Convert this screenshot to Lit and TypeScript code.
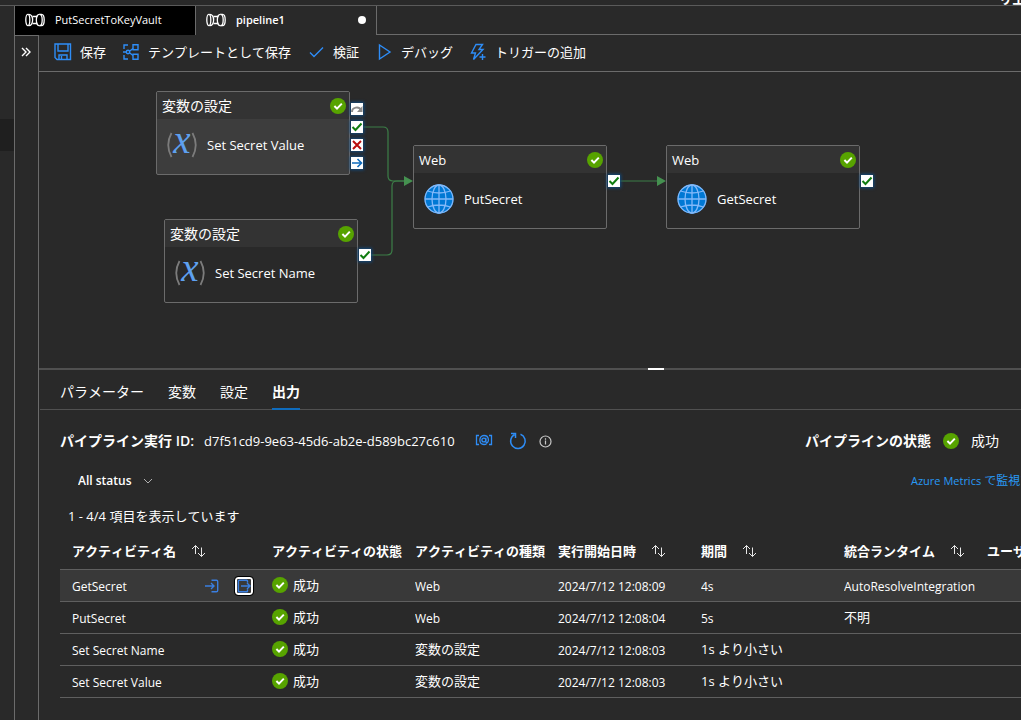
import { LitElement, html, svg, css, nothing } from "lit";
import { customElement, property } from "lit/decorators.js";
import { classMap } from "lit/directives/class-map.js";

const successIcon = html`<svg class="success" width="16" height="16" viewBox="0 0 16 16" role="img" aria-label="成功">
  <circle cx="8" cy="8" r="8" fill="#57a300" />
  <path d="M4.400 8l2.600 2.600 4.800-5" fill="none" stroke="#fff" stroke-width="2" />
</svg>`;

const pipelineIcon = html`<svg width="20" height="14" viewBox="0 0 20 14" fill="none" stroke="#fff" stroke-width="1.300" aria-hidden="true">
  <ellipse cx="2.800" cy="7" rx="2" ry="5.600" />
  <path d="M3.500 1.300c5.500-.6 5.500 12 0 11.400" />
  <path d="M7.500 3.500h5M7.500 10.500h5" />
  <path d="M14.500 1.300c-4.200 0-4.200 11.400 0 11.400" />
  <path d="M14.500 1.300c3.600 0 3.600 11.400 0 11.400" />
  <path d="M14.500 1.300h2c3.600 0 3.600 11.400 0 11.400h-2" />
</svg>`;

const sortIcon = html`<svg width="15" height="14" viewBox="0 0 15 14" fill="none" stroke="#e8e8e8" stroke-width="1" aria-hidden="true">
  <path d="M4.500 10V1.500M1 5l3.500-3.500L8 5M10.500 3.500v9M7 9l3.500 3.500L14 9" />
</svg>`;

const toolIcons = {
  save: svg`<path d="M1 1h15.500v15.500H3L1 14.500zM4 1v7h10V1M5 16.500v-4.500h8v4.500M7.500 13v3" />`,
  template: svg`<path d="M2 6V2h4M6 16H2v-4M11 1.800h5v5h-5zM11 11.200h5v5h-5z" /><circle cx="6" cy="9" r="1.700" /><path d="M1 9h3.300M7.500 8.200L11 5.500M7.500 9.800l3.500 2.700" />`,
  check: svg`<path d="M3 9.500l4 4L16 4.500" />`,
  play: svg`<path d="M4.500 2v14L15 9z" />`,
  trigger: svg`<path d="M7 1.500h6.500L10 6.500h4L4.500 16.500l2-6.500H2.500z" /><path d="M13.500 11v6M10.500 14h6" />`,
};

const tools: Array<[keyof typeof toolIcons, string]> = [
  ["save", "保存"],
  ["template", "テンプレートとして保存"],
  ["check", "検証"],
  ["play", "デバッグ"],
  ["trigger", "トリガーの追加"],
];

const variableIcon = html`<svg width="32" height="32" viewBox="0 0 32 32" aria-hidden="true">
  <path d="M5.500 4Q-1 16 5.500 28M26.500 4Q33 16 26.500 28" fill="none" stroke="#7c7c7c" stroke-width="1.800" />
  <text x="16" y="24" text-anchor="middle" font-family="Liberation Serif, serif" font-style="italic" font-size="39" fill="#5ea0ef">x</text>
</svg>`;

const globeIcon = html`<svg width="32" height="32" viewBox="0 0 32 32" aria-hidden="true">
  <circle cx="16" cy="16" r="14.500" fill="#0078d4" />
  <g fill="none" stroke="#83b9f9" stroke-width="1.300">
    <circle cx="16" cy="16" r="14" />
    <ellipse cx="16" cy="16" rx="7" ry="14" />
    <path d="M16 2v28M2 16h28M4.500 8Q16 12 27.500 8M4.500 24Q16 20 27.500 24" />
  </g>
</svg>`;

const portIcons = {
  skip: svg`<path d="M1 9c0-5 7-6 9-2" stroke="#8a8a8a" stroke-width="2" /><path d="M11.500 3v6H6z" fill="#8a8a8a" />`,
  ok: svg`<path d="M1.500 6l3 3 6-6.500" stroke="#107c10" stroke-width="2" />`,
  fail: svg`<path d="M2 2l8 8M10 2l-8 8" stroke="#b90e0e" stroke-width="2" />`,
  done: svg`<path d="M1 6h9M6.500 2l4 4-4 4" stroke="#0f6cbd" stroke-width="1.600" />`,
};
type Port = keyof typeof portIcons;

interface ActivityNode {
  x: number;
  y: number;
  kind: "var" | "web";
  type: string;
  name: string;
  selected?: boolean;
  ports: Port[];
}

const nodes: ActivityNode[] = [
  { x: 117, y: 19, kind: "var", type: "変数の設定", name: "Set Secret Value", selected: true, ports: ["skip", "ok", "fail", "done"] },
  { x: 125, y: 147, kind: "var", type: "変数の設定", name: "Set Secret Name", ports: ["ok"] },
  { x: 374, y: 73, kind: "web", type: "Web", name: "PutSecret", ports: ["ok"] },
  { x: 627, y: 73, kind: "web", type: "Web", name: "GetSecret", ports: ["ok"] },
];

@customElement("activity-node")
class ActivityNodeElement extends LitElement {
  @property({ attribute: false }) node!: ActivityNode;

  static styles = css`
    :host {
      display: block;
    }
    .card {
      box-sizing: border-box;
      width: 194px;
      height: 84px;
      border: 1px solid #6b6b6b;
      border-radius: 2px;
      background: #292929;
    }
    .selected {
      background: #3d3d3d;
    }
    .head {
      display: flex;
      align-items: center;
      justify-content: space-between;
      height: 27px;
      padding: 0 3px 0 5px;
      background: #333;
      font-size: 14px;
    }
    .web .head {
      font-size: 13px;
    }
    .body {
      display: flex;
      align-items: center;
      gap: 9px;
      height: 51px;
      padding-left: 9px;
      font-size: 13px;
    }
    .ports {
      position: absolute;
      left: 195px;
      top: 12px;
      display: grid;
      gap: 6px;
    }
    .single {
      top: 30px;
    }
    .port {
      display: block;
      background: #fff;
      box-shadow: 0 0 3px 1px #0f4a80;
    }
  `;

  render() {
    const n = this.node;
    return html`
      <div class=${classMap({ card: true, selected: !!n.selected, web: n.kind === "web" })}>
        <div class="head"><span>${n.type}</span>${successIcon}</div>
        <div class="body">${n.kind === "web" ? globeIcon : variableIcon}<span>${n.name}</span></div>
      </div>
      <div class=${classMap({ ports: true, single: n.ports.length === 1 })}>
        ${n.ports.map(
          (p) => html`<svg class="port" width="12" height="12" viewBox="0 0 12 12" fill="none">${portIcons[p]}</svg>`,
        )}
      </div>
    `;
  }
}

const columns: Array<{ label: string; sort: boolean }> = [
  { label: "アクティビティ名", sort: true },
  { label: "アクティビティの状態", sort: false },
  { label: "アクティビティの種類", sort: false },
  { label: "実行開始日時", sort: true },
  { label: "期間", sort: true },
  { label: "統合ランタイム", sort: true },
  { label: "ユーザー プロパティ", sort: false },
];

const runs = [
  { name: "GetSecret", type: "Web", start: "2024/7/12 12:08:09", duration: "4s", runtime: "AutoResolveIntegrationRuntime", active: true },
  { name: "PutSecret", type: "Web", start: "2024/7/12 12:08:04", duration: "5s", runtime: "不明", active: false },
  { name: "Set Secret Name", type: "変数の設定", start: "2024/7/12 12:08:03", duration: "1s より小さい", runtime: "", active: false },
  { name: "Set Secret Value", type: "変数の設定", start: "2024/7/12 12:08:03", duration: "1s より小さい", runtime: "", active: false },
];

/* Latin glyphs run wide in this family, so purely Latin cells take the smaller size. */
const cellText = (t: string) => {
  const latin = /^[\x00-\x7f]*$/.test(t);
  return html`<div class=${classMap({ clip: true, latin, kana: !latin })}>${t}</div>`;
};

@customElement("app-root")
class AppRoot extends LitElement {
  static styles = css`
    :host {
      display: flex;
      flex-direction: column;
      min-height: 100vh;
      overflow: hidden;
      background: #292929;
      color: #fff;
      font-family: "Open Sans", "Noto Sans CJK JP", sans-serif;
      font-size: 13px;
      font-kerning: none;
      line-height: 20px;
    }
    button,
    select {
      border: 0;
      margin: 0;
      padding: 0;
      background: none;
      color: inherit;
      font: inherit;
      font-kerning: none;
      white-space: nowrap;
    }
    a {
      color: #2899f5;
      text-decoration: none;
    }
    svg {
      flex: none;
      display: block;
    }
    .banner {
      display: flex;
      align-items: flex-end;
      justify-content: flex-end;
      height: 5px;
      overflow: hidden;
      border-bottom: 1px solid #5a5a5a;
      font-weight: 600;
      line-height: 12px;
    }
    .banner span {
      width: 22px;
      white-space: nowrap;
    }
    .shell {
      flex: 1;
      display: flex;
    }
    .rail {
      width: 14px;
      flex: none;
      padding-top: 113px;
      border-right: 1px solid #6b6b6b;
    }
    .railitem {
      height: 32px;
      background: #1f1f1f;
    }
    .work {
      flex: 1;
      min-width: 0;
      display: flex;
      flex-direction: column;
    }
    .files {
      display: flex;
      height: 29px;
    }
    .file {
      display: flex;
      align-items: center;
      gap: 10px;
      width: 181px;
      padding: 0 10px 2px;
      border-right: 1px solid #6b6b6b;
      font-size: 11px;
      text-align: left;
    }
    .inactive {
      background: #000;
    }
    .current {
      font-weight: 600;
    }
    .dirty {
      width: 8px;
      height: 8px;
      margin-left: auto;
      border-radius: 50%;
      background: #fff;
    }
    .filler {
      flex: 1;
      border-bottom: 1px solid #6b6b6b;
    }
    .editor {
      flex: 1;
      display: flex;
    }
    .fold {
      width: 23px;
      flex: none;
      border-top: 1px solid #6b6b6b;
      border-right: 1px solid #6b6b6b;
    }
    .fold button {
      display: flex;
      align-items: center;
      justify-content: center;
      width: 100%;
      height: 32px;
      padding-right: 2px;
    }
    .main {
      flex: 1;
      min-width: 0;
    }
    .toolbar {
      display: flex;
      align-items: center;
      gap: 16px;
      height: 34px;
      padding: 0 0 2px 15px;
      border-bottom: 1px solid #6b6b6b;
    }
    .tool {
      display: flex;
      align-items: center;
      gap: 8px;
    }
    .tool svg {
      fill: none;
      stroke: #2e8df7;
      stroke-width: 1.4;
    }
    .canvas {
      position: relative;
      height: 296px;
      overflow: hidden;
    }
    .links {
      position: absolute;
      left: 0;
      top: 0;
    }
    activity-node {
      position: absolute;
    }
    .splitter {
      display: flex;
      justify-content: center;
      height: 2px;
      background: #505050;
    }
    .grip {
      width: 16px;
      margin-left: 252px;
      background: #fff;
    }
    .tabs {
      display: flex;
      gap: 24px;
      height: 39px;
      margin-left: 1px;
      padding-left: 20px;
      border-bottom: 1px solid #505050;
      font-size: 14px;
    }
    .tab {
      height: 40px;
      padding-top: 6px;
      box-sizing: border-box;
      border-bottom: 2px solid transparent;
    }
    .on {
      border-bottom-color: #0f6cbd;
      font-weight: 700;
    }
    .details {
      padding: 10px 0 22px 21px;
    }
    .run {
      display: flex;
      align-items: center;
      height: 42px;
      padding-right: 22px;
      font-size: 14px;
    }
    .strong {
      font-weight: 600;
      white-space: nowrap;
    }
    .runid {
      margin: 0 20px 0 10px;
      font-size: 13px;
    }
    .refresh {
      margin: 0 12px 0 16px;
    }
    .state {
      display: flex;
      align-items: center;
      gap: 12px;
      margin-left: auto;
      white-space: nowrap;
    }
    .filter {
      display: flex;
      align-items: center;
      justify-content: space-between;
      height: 38px;
      padding-left: 18px;
    }
    .pick {
      display: flex;
      align-items: center;
      gap: 11px;
    }
    .pick select {
      appearance: none;
      font-size: 12px;
      font-weight: 600;
    }
    .metrics {
      width: 110px;
      font-size: 12px;
      white-space: nowrap;
    }
    .small {
      font-size: 11px;
    }
    .count {
      padding: 6px 8px;
    }
    .scroll {
      overflow: hidden;
    }
    table {
      width: 1058px;
      table-layout: fixed;
      border-collapse: separate;
      border-spacing: 0;
    }
    .first {
      width: 200px;
    }
    th,
    td {
      box-sizing: border-box;
      padding: 0 0 0 12px;
      border-bottom: 1px solid #5f5f5f;
      text-align: left;
      white-space: nowrap;
      vertical-align: middle;
    }
    th {
      height: 38px;
      font-weight: 600;
    }
    td {
      height: 32px;
    }
    .sort {
      display: flex;
      align-items: center;
      gap: 15px;
    }
    .hot {
      background: #393939;
    }
    .clip {
      overflow: hidden;
    }
    .latin {
      padding-top: 2px;
      font-size: 12px;
    }
    .kana {
      padding-bottom: 2px;
    }
    .status {
      display: flex;
      align-items: center;
      gap: 5px;
      padding-bottom: 2px;
    }
    .name {
      display: flex;
      align-items: center;
      justify-content: space-between;
      padding-right: 7px;
    }
    .io {
      display: flex;
      align-items: center;
      gap: 16px;
    }
    .focus {
      border-radius: 3px;
      outline: 1px solid #000;
      border: 2px solid #fff;
    }
  `;

  private ioIcon(out: boolean) {
    return html`<svg width="14" height="14" viewBox="0 0 14 14" fill="none" stroke="#3a7fe0" stroke-width="1.400">
      ${out
        ? svg`<path d="M10.500 3.500v-1.500q0-.8-.8-.8h-7.500q-.8 0-.8.8v10q0 .8.800.8h7.500q.8 0 .8-.8v-1.500M4 7h9M10 4l3 3-3 3" />`
        : svg`<path d="M6.500 1.300h5q1.200 0 1.200 1.200v9q0 1.200-1.200 1.200h-5M0 7h9M6 4l3 3-3 3" />`}
    </svg>`;
  }

  render() {
    return html`
      <header class="banner"><span>リエ</span></header>
      <div class="shell">
        <nav class="rail"><div class="railitem"></div></nav>
        <div class="work">
          <div class="files">
            <button class="file inactive">${pipelineIcon}<span>PutSecretToKeyVault</span></button>
            <button class="file current">${pipelineIcon}<span>pipeline1</span><span class="dirty"></span></button>
            <div class="filler"></div>
          </div>
          <div class="editor">
            <aside class="fold">
              <button aria-label="展開">
                <svg width="10" height="10" viewBox="0 0 10 10" fill="none" stroke="#fff" stroke-width="1.400">
                  <path d="M1 1l4 4-4 4M5 1l4 4-4 4" />
                </svg>
              </button>
            </aside>
            <main class="main">
              <div class="toolbar">
                ${tools.map(
                  ([icon, label]) => html`<button class="tool">
                    <svg width="18" height="18" viewBox="0 0 18 18" aria-hidden="true">${toolIcons[icon]}</svg
                    ><span>${label}</span>
                  </button>`,
                )}
              </div>
              <div class="canvas">
                <svg class="links" width="640" height="200" viewBox="0 0 640 200" fill="none" stroke="#3c7f48" stroke-width="1.200">
                  <path d="M324 55h20q5 0 5 5v44q0 5 5 5h12" />
                  <path d="M332 183h16q5 0 5-5v-64q0-5 5-5h8" />
                  <path d="M581 109h38" />
                  <path d="M365 104l9 5-9 5zM618 104l9 5-9 5z" fill="#459150" stroke="none" />
                </svg>
                ${nodes.map((n) => html`<activity-node style="left:${n.x}px;top:${n.y}px" .node=${n}></activity-node>`)}
              </div>
              <div class="splitter"><div class="grip"></div></div>
              <nav class="tabs">
                <button class="tab">パラメーター</button>
                <button class="tab">変数</button>
                <button class="tab">設定</button>
                <button class="tab on">出力</button>
              </nav>
              <section class="details">
                <div class="run">
                  <span class="strong">パイプライン実行 ID:</span>
                  <span class="runid">d7f51cd9-9e63-45d6-ab2e-d589bc27c610</span>
                  <button aria-label="パラメーター">
                    <svg width="18" height="14" viewBox="0 0 18 14" fill="none" stroke="#2e8df7" stroke-width="1.300">
                      <path d="M4 1.500H1.500v9H4M14 1.500h2.500v9H14" />
                      <path d="M11 8.800c3.500.5 3.500-7.300-2-7.300-5.500 0-5.500 9 0 9 1 0 2-.3 2.500-.7" />
                      <circle cx="8.800" cy="6" r="1.900" />
                      <path d="M10.800 3.800v3.500c0 1 .8 1.500 1.400 1.300" />
                    </svg>
                  </button>
                  <button class="refresh" aria-label="最新の情報に更新">
                    <svg width="18" height="18" viewBox="0 0 18 18" fill="none" stroke="#2e8df7" stroke-width="1.500">
                      <path d="M11.500 2.300a7.300 7.300 0 1 1-6 .4M2 1.500h4.500V6" />
                    </svg>
                  </button>
                  <svg width="13" height="13" viewBox="0 0 13 13" fill="none" stroke="#c8c8c8" stroke-width="1.200">
                    <circle cx="6.500" cy="6.500" r="5.500" />
                    <path d="M6.500 5.500v4M6.500 3.300v1.400" />
                  </svg>
                  <div class="state"><span class="strong">パイプラインの状態</span>${successIcon}<span>成功</span></div>
                </div>
                <div class="filter">
                  <div class="pick">
                    <select aria-label="状態">
                      <option>All status</option>
                    </select>
                    <svg width="10" height="6" viewBox="0 0 10 6" fill="none" stroke="#b0b0b0"><path d="M1 1l4 4 4-4" /></svg>
                  </div>
                  <a class="metrics" href="#"><span class="small">Azure Metrics</span> で監視する</a>
                </div>
                <div class="count">1 - 4/4 項目を表示しています</div>
                <div class="scroll">
                  <table>
                    <thead>
                      <tr>
                        ${columns.map(
                          (c, i) => html`<th scope="col" class=${i === 0 ? "first" : ""}>
                            ${c.sort ? html`<button class="sort">${c.label}${sortIcon}</button>` : c.label}
                          </th>`,
                        )}
                      </tr>
                    </thead>
                    <tbody>
                      ${runs.map(
                        (r) => html`<tr class=${r.active ? "hot" : ""}>
                          <td>
                            <div class="name">
                              <span class="latin">${r.name}</span>
                              ${r.active
                                ? html`<span class="io">
                                    <button aria-label="入力">${this.ioIcon(false)}</button>
                                    <button class="focus" aria-label="出力">${this.ioIcon(true)}</button>
                                  </span>`
                                : nothing}
                            </div>
                          </td>
                          <td><div class="status">${successIcon}<span>成功</span></div></td>
                          <td>${cellText(r.type)}</td>
                          <td>${cellText(r.start)}</td>
                          <td>${cellText(r.duration)}</td>
                          <td>${cellText(r.runtime)}</td>
                          <td></td>
                        </tr>`,
                      )}
                    </tbody>
                  </table>
                </div>
              </section>
            </main>
          </div>
        </div>
      </div>
    `;
  }
}
